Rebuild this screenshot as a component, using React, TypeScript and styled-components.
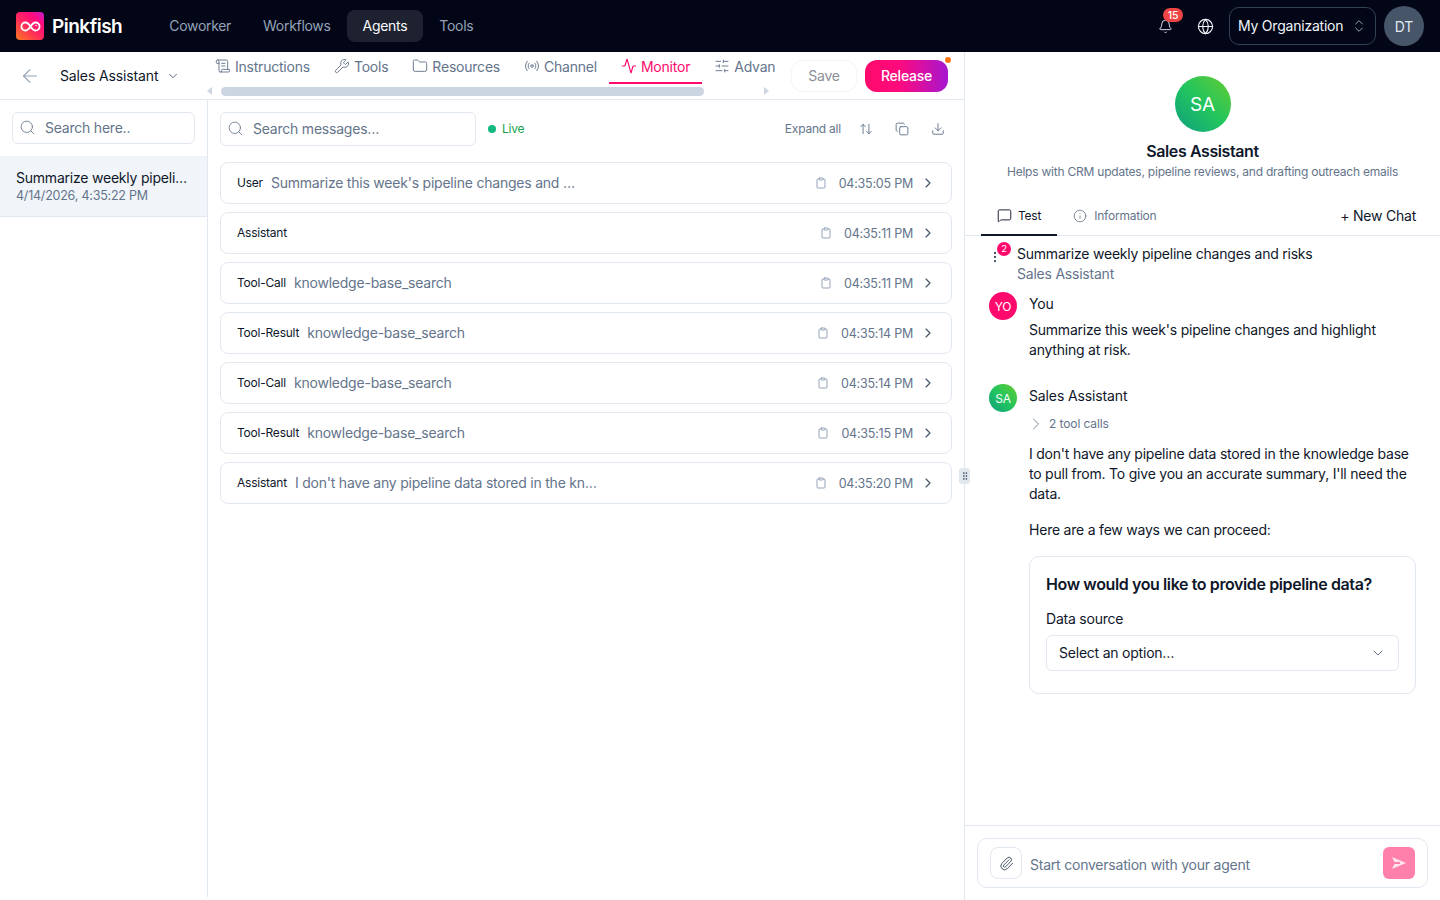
import React, { FC } from "react";
import styled, { createGlobalStyle } from "styled-components";
import {
  Activity,
  ArrowLeft,
  ArrowUpDown,
  Bell,
  ChevronDown,
  ChevronRight,
  ChevronsUpDown,
  Clipboard,
  Copy,
  Download,
  EllipsisVertical,
  Folder,
  Globe,
  GripVertical,
  Info,
  MessageSquare,
  Paperclip,
  Radio,
  ScrollText,
  Search,
  SlidersHorizontal,
  Wrench,
} from "lucide-react";

const GlobalStyle = createGlobalStyle`
  * { box-sizing: border-box; }
  html, body { margin: 0; height: 100%; background: #fff; }
  body {
    font-family: Inter, "Liberation Sans", sans-serif;
    color: #0f172a;
    overflow: hidden;
    letter-spacing: -0.22px;
  }
`;

const Page = styled.div`
  height: 900px;
  display: flex;
  flex-direction: column;
`;

const TopBar = styled.header`
  height: 52px;
  flex: none;
  background: #020617;
  display: flex;
  align-items: center;
  padding: 0 16px;
`;

const LogoMark = styled.div`
  width: 28px;
  height: 28px;
  border-radius: 4px;
  background: linear-gradient(40deg, #ff7a20 0%, #ff2a5c 45%, #ff0a80 75%, #c01fd0 100%);
  display: flex;
  align-items: center;
  justify-content: center;
`;

const LogoText = styled.div`
  margin-left: 8px;
  font-size: 19px;
  font-weight: 600;
  color: #fff;
  letter-spacing: -0.5px;
`;

const Nav = styled.nav`
  margin-left: 31px;
  display: flex;
  align-items: center;
  letter-spacing: -0.3px;
`;

const NavItem = styled.div<{ $active?: boolean }>`
  height: 32px;
  padding: 0 16px 1px;
  display: flex;
  align-items: center;
  font-size: 14px;
  border-radius: 8px;
  color: ${(p) => (p.$active ? "#f8fafc" : "#94a3b8")};
  background: ${(p) => (p.$active ? "#1e2230" : "transparent")};
`;

const TopRight = styled.div`
  margin-left: auto;
  display: flex;
  align-items: center;
`;

const BellWrap = styled.div`
  position: relative;
  width: 16px;
  height: 16px;
  color: #e2e8f0;
  margin-right: 23px;
  margin-left: 1px;
`;

const BellBadge = styled.span`
  position: absolute;
  top: -10px;
  left: 5px;
  width: 20px;
  height: 14px;
  border-radius: 7px;
  background: #ef4444;
  color: #fff;
  font-size: 10.5px;
  font-weight: 500;
  display: flex;
  align-items: center;
  justify-content: center;
`;

const OrgSelect = styled.div`
  margin-left: 15px;
  width: 147px;
  height: 38px;
  border: 1px solid #334155;
  border-radius: 10px;
  display: flex;
  align-items: center;
  justify-content: space-between;
  padding: 0 8px 1px 8px;
  font-size: 14px;
  color: #f1f5f9;
`;

const UserAvatar = styled.div`
  margin-left: 8px;
  width: 40px;
  height: 40px;
  border-radius: 50%;
  background: #475569;
  color: #e2e8f0;
  font-size: 14px;
  display: flex;
  align-items: center;
  justify-content: center;
`;

const Body = styled.div`
  flex: 1;
  display: flex;
  min-height: 0;
`;

const LeftPane = styled.div`
  width: 965px;
  flex: none;
  display: flex;
  flex-direction: column;
  border-right: 1px solid #e2e8f0;
  position: relative;
`;

const SubHeader = styled.div`
  height: 48px;
  flex: none;
  display: flex;
  border-bottom: 1px solid #e2e8f0;
`;

const AgentPicker = styled.div`
  width: 203px;
  flex: none;
  display: flex;
  align-items: center;
  padding-left: 19px;
  font-size: 14px;
  letter-spacing: -0.13px;
  color: #0f172a;
`;

const AgentName = styled.span`
  margin-left: 19px;
  margin-right: 8px;
`;

const TabsColumn = styled.div`
  width: 572px;
  flex: none;
  display: flex;
  flex-direction: column;
  overflow: hidden;
`;

const TabsRow = styled.div`
  height: 32px;
  display: flex;
  flex: none;
`;

const Tab = styled.div<{ $active?: boolean }>`
  flex: none;
  height: 32px;
  padding: 0 12px 2px;
  display: flex;
  align-items: center;
  gap: 4px;
  font-size: 14px;
  white-space: nowrap;
  color: ${(p) => (p.$active ? "#ff0a6c" : "#64748b")};
  border-bottom: 2px solid ${(p) => (p.$active ? "#ff0a6c" : "transparent")};
`;

const ScrollRow = styled.div`
  height: 15px;
  display: flex;
  align-items: center;
  padding: 0 0 1px 4px;
`;

const ArrowLeftTri = styled.div`
  width: 0;
  height: 0;
  border-style: solid;
  border-width: 4.5px 5px 4.5px 0;
  border-color: transparent #cbd5e1 transparent transparent;
`;

const ArrowRightTri = styled.div`
  width: 0;
  height: 0;
  margin-left: 60px;
  border-style: solid;
  border-width: 4.5px 0 4.5px 5px;
  border-color: transparent transparent transparent #cbd5e1;
`;

const ScrollThumb = styled.div`
  margin-left: 9px;
  width: 483px;
  height: 9px;
  border-radius: 5px;
  background: #cbd5e1;
`;

const HeaderActions = styled.div`
  margin-left: 16px;
  display: flex;
  align-items: center;
  gap: 8px;
  height: 47px;
  padding-top: 1px;
`;

const SaveButton = styled.div`
  width: 66px;
  height: 32px;
  border: 1px solid #f1f5f9;
  border-radius: 12px;
  padding-bottom: 1px;
  color: #8a8f99;
  font-size: 14px;
  display: flex;
  align-items: center;
  justify-content: center;
`;

const ReleaseButton = styled.div`
  position: relative;
  width: 83px;
  height: 32px;
  border-radius: 12px;
  padding-bottom: 1px;
  background: linear-gradient(90deg, #ff0a6c 0%, #ff0a7c 40%, #a716d0 100%);
  color: #fff;
  font-size: 14px;
  font-weight: 500;
  display: flex;
  align-items: center;
  justify-content: center;
`;

const ReleaseDot = styled.span`
  position: absolute;
  top: -3px;
  right: -3px;
  width: 6px;
  height: 6px;
  border-radius: 50%;
  background: #f97316;
`;

const Columns = styled.div`
  flex: 1;
  display: flex;
  min-height: 0;
  margin-bottom: 3px;
`;

const Sidebar = styled.aside`
  width: 208px;
  flex: none;
  border-right: 1px solid #e2e8f0;
`;

const SearchBox = styled.div<{ $h: number }>`
  height: ${(p) => p.$h}px;
  border: 1px solid #e2e8f0;
  border-radius: 6px;
  display: flex;
  align-items: center;
  padding: 0 0 1px 6px;
  gap: 9px;
  font-size: 14px;
  color: #64748b;
`;

const SidebarSearch = styled.div`
  padding: 12px;
`;

const ChatItem = styled.div`
  height: 61px;
  background: #f1f5f9;
  border-bottom: 1px solid #e2e8f0;
  padding: 13px 16px 0;
`;

const ChatTitle = styled.div`
  font-size: 14px;
  line-height: 18px;
  white-space: nowrap;
  color: #0f172a;
`;

const ChatDate = styled.div`
  margin-top: 1px;
  font-size: 12.5px;
  line-height: 16px;
  color: #64748b;
`;

const Main = styled.main`
  flex: 1;
  min-width: 0;
  padding: 12px 12px 0;
`;

const MonitorBar = styled.div`
  display: flex;
  align-items: center;
  margin-bottom: 16px;
`;

const MessageSearch = styled.div`
  width: 256px;
`;

const LiveTag = styled.div`
  margin-left: 12px;
  padding-bottom: 1px;
  display: flex;
  align-items: center;
  gap: 6px;
  font-size: 12px;
  color: #16a34a;
`;

const LiveDot = styled.span`
  width: 8px;
  height: 8px;
  border-radius: 50%;
  background: #10b981;
`;

const BarActions = styled.div`
  margin-left: auto;
  margin-right: -4px;
  display: flex;
  align-items: center;
  color: #64748b;
`;

const ExpandAll = styled.span`
  font-size: 12px;
  margin-right: 7px;
  padding-bottom: 1px;
`;

const IconSlot = styled.div`
  width: 36px;
  display: flex;
  justify-content: center;
`;

const Rows = styled.div`
  display: flex;
  flex-direction: column;
  gap: 8px;
`;

const RowBox = styled.div`
  height: 42px;
  border: 1px solid #e2e8f0;
  border-radius: 8px;
  display: flex;
  align-items: center;
  padding: 0 15px 0 16px;
`;

const RowLabel = styled.span`
  font-size: 12px;
  padding-bottom: 1px;
  color: #0f172a;
`;

const RowText = styled.span`
  margin-left: 8px;
  margin-bottom: 1px;
  font-size: 14px;
  color: #64748b;
`;

const RowTime = styled.span`
  margin-left: auto;
  display: flex;
  align-items: center;
  gap: 12px;
  font-size: 12.5px;
  color: #64748b;
`;

const RowChevron = styled(ChevronRight)`
  margin-left: 7px;
  color: #475569;
`;

const ResizeHandle = styled.div`
  position: absolute;
  top: 416px;
  right: -6px;
  width: 11px;
  height: 16px;
  border-radius: 3px;
  background: #e2e8f0;
  color: #475569;
  display: flex;
  align-items: center;
  justify-content: center;
`;

const RightPane = styled.section`
  flex: 1;
  min-width: 0;
  display: flex;
  flex-direction: column;
`;

const AgentHead = styled.div`
  flex: none;
  padding-top: 24px;
  display: flex;
  flex-direction: column;
  align-items: center;
`;

const BigAvatar = styled.div`
  width: 56px;
  height: 56px;
  border-radius: 50%;
  background: linear-gradient(225deg, #65cc30 0%, #22c55e 50%, #0e9f80 100%);
  color: #fff;
  font-size: 19px;
  display: flex;
  align-items: center;
  justify-content: center;
`;

const AgentTitle = styled.div`
  margin-top: 9px;
  font-size: 16px;
  line-height: 20px;
  font-weight: 600;
  letter-spacing: -0.4px;
  color: #0f172a;
`;

const AgentSub = styled.div`
  margin-top: 2px;
  font-size: 12px;
  line-height: 18px;
  color: #64748b;
`;

const ChatTabs = styled.div`
  flex: none;
  margin-top: 18px;
  height: 37px;
  display: flex;
  align-items: stretch;
  padding: 0 24px 0 16px;
  border-bottom: 1px solid #e2e8f0;
`;

const ChatTab = styled.div<{ $active?: boolean }>`
  display: flex;
  align-items: center;
  gap: ${(p) => (p.$active ? 6 : 7)}px;
  padding: 0 16px 2px;
  font-size: 12px;
  margin-bottom: -1px;
  color: ${(p) => (p.$active ? "#0f172a" : "#64748b")};
  border-bottom: 2px solid ${(p) => (p.$active ? "#0f172a" : "transparent")};
`;

const NewChat = styled.div`
  margin-left: auto;
  display: flex;
  align-items: center;
  padding-bottom: 3px;
  font-size: 14px;
  color: #0f172a;
`;

const Thread = styled.div`
  flex: 1;
  min-height: 0;
  padding: 8px 24px 0;
`;

const ThreadHead = styled.div`
  position: relative;
  padding-left: 24px;
  margin-left: 4px;
  font-size: 14px;
  line-height: 20px;
`;

const Kebab = styled(EllipsisVertical)`
  position: absolute;
  left: -5px;
  top: 6px;
  color: #475569;
`;

const CountBadge = styled.span`
  position: absolute;
  left: 4px;
  top: -2px;
  width: 14px;
  height: 14px;
  border-radius: 50%;
  background: #ff0a6c;
  color: #fff;
  font-size: 9.5px;
  display: flex;
  align-items: center;
  justify-content: center;
`;

const Muted = styled.div`
  color: #64748b;
`;

const Message = styled.div<{ $mt: number }>`
  margin-top: ${(p) => p.$mt}px;
  display: flex;
  gap: 12px;
`;

const SmallAvatar = styled.div<{ $bot?: boolean }>`
  flex: none;
  width: 28px;
  height: 28px;
  border-radius: 50%;
  color: #fff;
  font-size: 12px;
  display: flex;
  align-items: center;
  justify-content: center;
  background: ${(p) =>
    p.$bot ? "linear-gradient(225deg, #65cc30 0%, #22c55e 50%, #0e9f80 100%)" : "#ff0a6c"};
`;

const MessageBody = styled.div`
  flex: 1;
  min-width: 0;
  font-size: 14px;
  line-height: 20px;
  color: #0f172a;
`;

const Sender = styled.div`
  margin-top: 2px;
  margin-bottom: 6px;
  line-height: 20px;
  letter-spacing: -0.13px;
`;

const ToolCalls = styled.div`
  display: flex;
  align-items: center;
  margin: 9px 0 11px -3px;
  gap: 3px;
  height: 18px;
  font-size: 12px;
  line-height: 18px;
  letter-spacing: -0.1px;
  color: #64748b;
`;

const Para = styled.p<{ $mt?: number }>`
  margin: ${(p) => p.$mt ?? 0}px 0 0;
`;

const FormCard = styled.div`
  margin-top: 16px;
  height: 138px;
  border: 1px solid #e2e8f0;
  border-radius: 10px;
  padding: 15px 16px;
`;

const FormTitle = styled.div`
  font-size: 16px;
  line-height: 24px;
  font-weight: 600;
  letter-spacing: -0.39px;
`;

const FormLabel = styled.div`
  margin-top: 13px;
  font-size: 14px;
  line-height: 20px;
`;

const SelectBox = styled.div`
  margin-top: 6px;
  height: 36px;
  border: 1px solid #e2e8f0;
  border-radius: 6px;
  display: flex;
  align-items: center;
  justify-content: space-between;
  padding: 0 12px;
  font-size: 14px;
`;

const ComposerWrap = styled.div`
  flex: none;
  height: 75px;
  border-top: 1px solid #e2e8f0;
  padding: 12px 12px 0;
`;

const Composer = styled.div`
  height: 50px;
  border: 1px solid #e2e8f0;
  border-radius: 10px;
  display: flex;
  align-items: center;
  padding: 0 12px;
  font-size: 14px;
  color: #64748b;
`;

const ComposerHint = styled.span`
  margin-top: 2px;
`;

const AttachButton = styled.div`
  width: 32px;
  height: 32px;
  border: 1px solid #e2e8f0;
  border-radius: 8px;
  display: flex;
  align-items: center;
  justify-content: center;
  color: #334155;
  margin-right: 8px;
`;

const SendButton = styled.div`
  margin-left: auto;
  width: 32px;
  height: 32px;
  border-radius: 6px;
  background: #ff80ab;
  display: flex;
  align-items: center;
  justify-content: center;
`;

const tabs = [
  { name: "Instructions", Icon: ScrollText },
  { name: "Tools", Icon: Wrench },
  { name: "Resources", Icon: Folder },
  { name: "Channel", Icon: Radio },
  { name: "Monitor", Icon: Activity, active: true },
  { name: "Advanced", Icon: SlidersHorizontal },
];

const rows = [
  { label: "User", text: "Summarize this week's pipeline changes and …", time: "04:35:05 PM" },
  { label: "Assistant", text: "", time: "04:35:11 PM" },
  { label: "Tool-Call", text: "knowledge-base_search", time: "04:35:11 PM" },
  { label: "Tool-Result", text: "knowledge-base_search", time: "04:35:14 PM" },
  { label: "Tool-Call", text: "knowledge-base_search", time: "04:35:14 PM" },
  { label: "Tool-Result", text: "knowledge-base_search", time: "04:35:15 PM" },
  { label: "Assistant", text: "I don't have any pipeline data stored in the kn…", time: "04:35:20 PM" },
];

const LogRow: FC<{ label: string; text: string; time: string }> = ({ label, text, time }) => (
  <RowBox>
    <RowLabel>{label}</RowLabel>
    {text && <RowText>{text}</RowText>}
    <RowTime>
      <Clipboard size={12} color="#94a3b8" />
      {time}
    </RowTime>
    <RowChevron size={16} strokeWidth={1.75} />
  </RowBox>
);

export default function App() {
  return (
    <Page>
      <GlobalStyle />
      <TopBar>
        <LogoMark>
          <svg width="21" height="11" viewBox="0 0 22 12" fill="none" stroke="#fff" strokeWidth="2">
            <path d="M11 6C9 3 7.500 1.600 5.500 1.600a4.400 4.400 0 0 0 0 8.800C7.500 10.400 9 9 11 6c2-3 3.500-4.400 5.500-4.400a4.400 4.400 0 0 1 0 8.800C14.500 10.400 13 9 11 6Z" />
            <circle cx="17" cy="5" r="0.8" fill="#fff" stroke="none" />
          </svg>
        </LogoMark>
        <LogoText>Pinkfish</LogoText>
        <Nav>
          <NavItem>Coworker</NavItem>
          <NavItem>Workflows</NavItem>
          <NavItem $active>Agents</NavItem>
          <NavItem>Tools</NavItem>
        </Nav>
        <TopRight>
          <BellWrap>
            <Bell size={15} strokeWidth={1.5} />
            <BellBadge>15</BellBadge>
          </BellWrap>
          <Globe size={17} color="#f1f5f9" strokeWidth={1.6} />
          <OrgSelect>
            My Organization
            <ChevronsUpDown size={16} color="#94a3b8" strokeWidth={1.5} />
          </OrgSelect>
          <UserAvatar>DT</UserAvatar>
        </TopRight>
      </TopBar>

      <Body>
        <LeftPane>
          <SubHeader>
            <AgentPicker>
              <ArrowLeft size={22} color="#94a3b8" strokeWidth={1.25} />
              <AgentName>Sales Assistant</AgentName>
              <ChevronDown size={14} color="#475569" strokeWidth={1.5} />
            </AgentPicker>
            <TabsColumn>
              <TabsRow>
                {tabs.map(({ name, Icon, active }) => (
                  <Tab key={name} $active={active}>
                    <Icon size={16} strokeWidth={active ? 1.75 : 1.4} />
                    {name}
                  </Tab>
                ))}
              </TabsRow>
              <ScrollRow>
                <ArrowLeftTri />
                <ScrollThumb />
                <ArrowRightTri />
              </ScrollRow>
            </TabsColumn>
            <HeaderActions>
              <SaveButton>Save</SaveButton>
              <ReleaseButton>
                Release
                <ReleaseDot />
              </ReleaseButton>
            </HeaderActions>
          </SubHeader>

          <Columns>
            <Sidebar>
              <SidebarSearch>
                <SearchBox $h={32}>
                  <Search size={17} strokeWidth={1.2} />
                  Search here..
                </SearchBox>
              </SidebarSearch>
              <ChatItem>
                <ChatTitle>Summarize weekly pipeli…</ChatTitle>
                <ChatDate>4/14/2026, 4:35:22 PM</ChatDate>
              </ChatItem>
            </Sidebar>
            <Main>
              <MonitorBar>
                <MessageSearch>
                  <SearchBox $h={34}>
                    <Search size={17} strokeWidth={1.2} />
                    Search messages…
                  </SearchBox>
                </MessageSearch>
                <LiveTag>
                  <LiveDot />
                  Live
                </LiveTag>
                <BarActions>
                  <ExpandAll>Expand all</ExpandAll>
                  <IconSlot>
                    <ArrowUpDown size={14} strokeWidth={1.6} />
                  </IconSlot>
                  <IconSlot>
                    <Copy size={14} strokeWidth={1.6} />
                  </IconSlot>
                  <IconSlot>
                    <Download size={14} strokeWidth={1.6} />
                  </IconSlot>
                </BarActions>
              </MonitorBar>
              <Rows>
                {rows.map((r, i) => (
                  <LogRow key={i} {...r} />
                ))}
              </Rows>
            </Main>
          </Columns>
          <ResizeHandle>
            <GripVertical size={10} />
          </ResizeHandle>
        </LeftPane>

        <RightPane>
          <AgentHead>
            <BigAvatar>SA</BigAvatar>
            <AgentTitle>Sales Assistant</AgentTitle>
            <AgentSub>Helps with CRM updates, pipeline reviews, and drafting outreach emails</AgentSub>
          </AgentHead>
          <ChatTabs>
            <ChatTab $active>
              <MessageSquare size={15} strokeWidth={1.5} />
              Test
            </ChatTab>
            <ChatTab>
              <Info size={14} strokeWidth={1.4} />
              Information
            </ChatTab>
            <NewChat>+ New Chat</NewChat>
          </ChatTabs>
          <Thread>
            <ThreadHead>
              <Kebab size={14} />
              <CountBadge>2</CountBadge>
              <div>Summarize weekly pipeline changes and risks</div>
              <Muted>Sales Assistant</Muted>
            </ThreadHead>
            <Message $mt={8}>
              <SmallAvatar>YO</SmallAvatar>
              <MessageBody>
                <Sender>You</Sender>
                <Para>Summarize this week's pipeline changes and highlight anything at risk.</Para>
              </MessageBody>
            </Message>
            <Message $mt={24}>
              <SmallAvatar $bot>SA</SmallAvatar>
              <MessageBody>
                <Sender>Sales Assistant</Sender>
                <ToolCalls>
                  <ChevronRight size={20} strokeWidth={1} />
                  2 tool calls
                </ToolCalls>
                <Para>
                  I don't have any pipeline data stored in the knowledge base to pull from. To give you an
                  accurate summary, I'll need the data.
                </Para>
                <Para $mt={16}>Here are a few ways we can proceed:</Para>
                <FormCard>
                  <FormTitle>How would you like to provide pipeline data?</FormTitle>
                  <FormLabel>Data source</FormLabel>
                  <SelectBox>
                    Select an option…
                    <ChevronDown size={16} color="#64748b" strokeWidth={1.5} />
                  </SelectBox>
                </FormCard>
              </MessageBody>
            </Message>
          </Thread>
          <ComposerWrap>
            <Composer>
              <AttachButton>
                <Paperclip size={15} strokeWidth={1.4} />
              </AttachButton>
              <ComposerHint>Start conversation with your agent</ComposerHint>
              <SendButton>
                <svg width="16" height="14" viewBox="0 0 16 14" fill="#ffe4ee">
                  <path d="M1 1l14 6-14 6 2.500-5h5.500V6H3.500z" />
                </svg>
              </SendButton>
            </Composer>
          </ComposerWrap>
        </RightPane>
      </Body>
    </Page>
  );
}
